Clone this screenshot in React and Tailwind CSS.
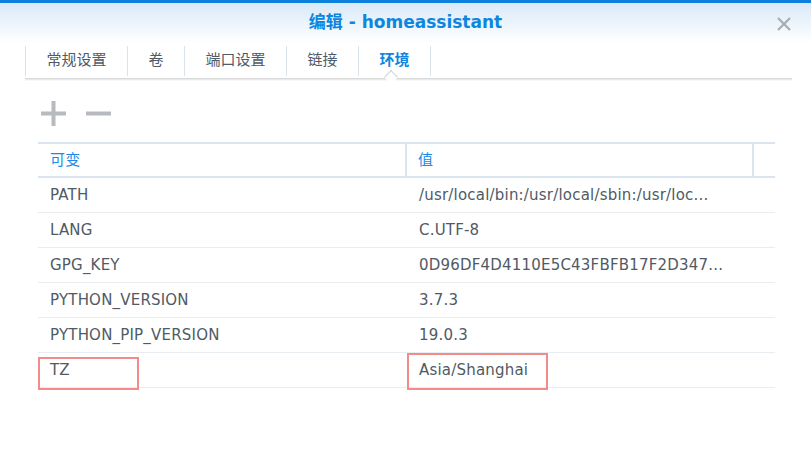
import React from "react";

const tabs = ["常规设置", "卷", "端口设置", "链接", "环境"];

const rows = [
  ["PATH", "/usr/local/bin:/usr/local/sbin:/usr/loc..."],
  ["LANG", "C.UTF-8"],
  ["GPG_KEY", "0D96DF4D4110E5C43FBFB17F2D347..."],
  ["PYTHON_VERSION", "3.7.3"],
  ["PYTHON_PIP_VERSION", "19.0.3"],
  ["TZ", "Asia/Shanghai"],
];

const font = { fontFamily: '"DejaVu Sans", Verdana, "Noto Sans CJK SC", sans-serif' };

export default function App() {
  return (
    <div className="w-[811px] h-[454px] bg-white overflow-hidden relative" style={font}>
      <div className="h-[3px] bg-[#0a80dc]" />
      <div className="h-[40px] flex items-center justify-center relative bg-gradient-to-b from-[#d9e9f8] to-white">
        <span className="text-[17px] font-bold text-[#0d86e0]">编辑 - homeassistant</span>
        <svg className="absolute right-[19px] top-[13px]" width="16" height="16" viewBox="0 0 16 16">
          <path d="M2 2 L14 14 M14 2 L2 14" stroke="#a9acaf" strokeWidth="2.2" />
        </svg>
      </div>

      {/* tabs */}
      <div className="ml-[25px] mr-[19px] relative">
        <div className="flex h-[35px] items-center">
          {tabs.map((t, i) => (
            <div
              key={t}
              className={`h-[30px] flex items-center px-[20.5px] border-l border-[#dbe3ea] text-[15px] ${
                i === tabs.length - 1 ? "border-r text-[#0d86e0] font-bold" : "text-[#4f5b66]"
              }`}
            >
              {t}
            </div>
          ))}
        </div>
        <div className="h-[3px] bg-gradient-to-b from-[#d4d4d4] to-white" />
        <div className="absolute left-[361px] top-[29px] w-[10px] h-[10px] bg-white border-l border-t border-[#d4d4d4] rotate-45" />
      </div>

      {/* toolbar */}
      <div className="flex items-center gap-[18px] ml-[40px] mt-[18px] h-[28px]">
        <svg width="27" height="27" viewBox="0 0 27 27">
          <path d="M13.5 1 V26 M1 13.5 H26" stroke="#b7babe" strokeWidth="4" />
        </svg>
        <svg width="27" height="27" viewBox="0 0 27 27">
          <path d="M1 13.5 H26" stroke="#b7babe" strokeWidth="4" />
        </svg>
      </div>

      {/* table */}
      <div className="ml-[38px] w-[737px] mt-[15px] text-[15px] tracking-[0.2px]">
        <div className="flex h-[36px] border-t-2 border-b-2 border-[#dae5f0] text-[#1a8ae6]">
          <div className="w-[369px] flex items-center pl-[12px] border-r-2 border-[#dae5f0]">可变</div>
          <div className="w-[347px] flex items-center pl-[11px] border-r-2 border-[#dae5f0]">值</div>
          <div className="flex-1" />
        </div>
        {rows.map(([k, v], i) => {
          const last = i === rows.length - 1;
          return (
            <div key={k} className="flex h-[35px] border-b border-[#e8edf2] text-[#4f5a65] relative">
              <div className="w-[369px] flex items-center pl-[12px]">{k}</div>
              <div className="flex-1 flex items-center pl-[12px]">{v}</div>
              {last && (
                <>
                  <div className="absolute left-0 top-[4px] w-[101px] h-[33px] border-2 border-[#f48b8b]" />
                  <div className="absolute left-[369px] top-0 w-[141px] h-[37px] border-2 border-[#f48b8b]" />
                </>
              )}
            </div>
          );
        })}
      </div>
    </div>
  );
}
